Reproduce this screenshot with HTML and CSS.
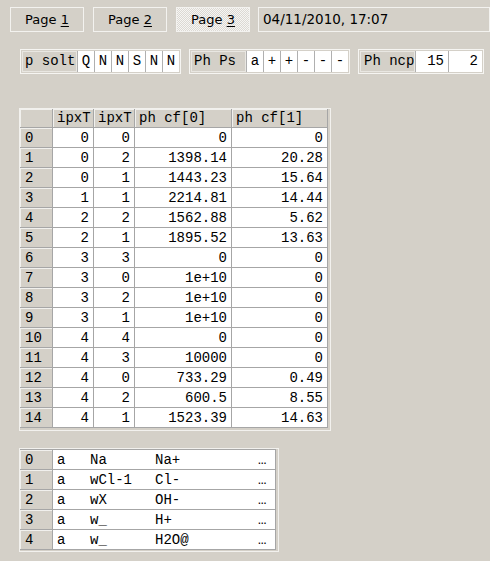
FILE: index.html
```html
<!DOCTYPE html>
<html>
<head>
<meta charset="utf-8">
<link rel="stylesheet" href="styles.css">
</head>
<body>
<div class="page">
  <div class="tabs">
    <div class="tab">Page <u>1</u></div>
    <div class="tab">Page <u>2</u></div>
    <div class="tab active">Page <u>3</u></div>
    <div class="date">04/11/2010, 17:07</div>
  </div>

  <div class="fields">
    <div class="group">
      <div class="label">p solt</div>
      <div class="cell">Q</div>
      <div class="cell">N</div>
      <div class="cell">N</div>
      <div class="cell">S</div>
      <div class="cell">N</div>
      <div class="cell">N</div>
    </div>
    <div class="group">
      <div class="label">Ph Ps</div>
      <div class="cell">a</div>
      <div class="cell">+</div>
      <div class="cell">+</div>
      <div class="cell">-</div>
      <div class="cell">-</div>
      <div class="cell">-</div>
    </div>
    <div class="group">
      <div class="label narrow">Ph ncp</div>
      <div class="cell num w33">15</div>
      <div class="cell num w34">2</div>
    </div>
  </div>

  <div class="frame main">
    <table class="grid">
      <colgroup>
        <col class="c-idx"><col class="c-n"><col class="c-n"><col class="c-w1"><col class="c-w2">
      </colgroup>
      <thead>
        <tr><th class="corner"></th><th>ipxT</th><th>ipxT</th><th>ph cf[0]</th><th>ph cf[1]</th></tr>
      </thead>
      <tbody>
        <tr><th>0</th><td>0</td><td>0</td><td>0</td><td>0</td></tr>
        <tr><th>1</th><td>0</td><td>2</td><td>1398.14</td><td>20.28</td></tr>
        <tr><th>2</th><td>0</td><td>1</td><td>1443.23</td><td>15.64</td></tr>
        <tr><th>3</th><td>1</td><td>1</td><td>2214.81</td><td>14.44</td></tr>
        <tr><th>4</th><td>2</td><td>2</td><td>1562.88</td><td>5.62</td></tr>
        <tr><th>5</th><td>2</td><td>1</td><td>1895.52</td><td>13.63</td></tr>
        <tr><th>6</th><td>3</td><td>3</td><td>0</td><td>0</td></tr>
        <tr><th>7</th><td>3</td><td>0</td><td>1e+10</td><td>0</td></tr>
        <tr><th>8</th><td>3</td><td>2</td><td>1e+10</td><td>0</td></tr>
        <tr><th>9</th><td>3</td><td>1</td><td>1e+10</td><td>0</td></tr>
        <tr><th>10</th><td>4</td><td>4</td><td>0</td><td>0</td></tr>
        <tr><th>11</th><td>4</td><td>3</td><td>10000</td><td>0</td></tr>
        <tr><th>12</th><td>4</td><td>0</td><td>733.29</td><td>0.49</td></tr>
        <tr><th>13</th><td>4</td><td>2</td><td>600.5</td><td>8.55</td></tr>
        <tr><th>14</th><td>4</td><td>1</td><td>1523.39</td><td>14.63</td></tr>
      </tbody>
    </table>
  </div>

  <div class="frame list">
    <table class="plist">
      <colgroup>
        <col class="l-idx"><col class="l-a"><col class="l-name"><col class="l-form"><col class="l-more">
      </colgroup>
      <tbody>
        <tr><th>0</th><td>a</td><td>Na</td><td>Na+</td><td class="more">…</td></tr>
        <tr><th>1</th><td>a</td><td>wCl-1</td><td>Cl-</td><td class="more">…</td></tr>
        <tr><th>2</th><td>a</td><td>wX</td><td>OH-</td><td class="more">…</td></tr>
        <tr><th>3</th><td>a</td><td>w_</td><td>H+</td><td class="more">…</td></tr>
        <tr><th>4</th><td>a</td><td>w_</td><td>H2O@</td><td class="more">…</td></tr>
      </tbody>
    </table>
  </div>
</div>
</body>
</html>
```

FILE: styles.css
```css
html, body {
  margin: 0;
  padding: 0;
  background: #d4d0c8;
}

.page {
  padding-top: 7px;
  font-family: "DejaVu Sans", "Liberation Sans", sans-serif;
  color: #000;
}

/* top tab row */
.tabs {
  display: flex;
  gap: 9px;
  padding-left: 10px;
}

.tab {
  width: 74px;
  height: 25px;
  box-sizing: border-box;
  border: 1px solid #f3f2ef;
  font-size: 13px;
  line-height: 23px;
  text-align: center;
}

.tab u {
  text-decoration: underline;
  text-underline-offset: 2px;
}

.tab.active {
  background: repeating-conic-gradient(#f6f5f3 0 25%, #dcd9d3 0 50%) 0 0 / 2px 2px;
}

.date {
  flex: 1;
  margin-left: -1px;
  height: 25px;
  box-sizing: border-box;
  border: 1px solid #f3f2ef;
  font-size: 13.5px;
  line-height: 23px;
  padding-left: 4px;
}

/* field groups */
.fields {
  display: flex;
  gap: 8px;
  margin: 17px 0 0 20px;
}

.group {
  display: flex;
  height: 25px;
  box-sizing: border-box;
  border: 1px solid #f6f5f2;
  padding: 1px;
  font-family: "Liberation Mono", monospace;
  font-size: 14px;
}

.label {
  width: 55px;
  box-sizing: border-box;
  border: 1px solid #e9e7e2;
  background: #d4d0c8;
  padding-left: 2px;
  line-height: 19px;
  white-space: nowrap;
  overflow: hidden;
}

.label.narrow {
  padding-left: 3px;
}

.cell {
  width: 17px;
  box-sizing: border-box;
  background: #fff;
  border-left: 1px solid #b0b0b0;
  text-align: center;
  line-height: 21px;
}

.cell.num {
  text-align: right;
  padding-right: 4px;
}

.cell.w33 { width: 33px; }
.cell.w34 { width: 34px; }

/* table frames */
.frame {
  display: block;
  width: fit-content;
  margin-left: 19px;
  border: 1px solid #f2f1ee;
}

.frame.main {
  margin-top: 34px;
  padding: 0 2px 2px 0;
}

.frame.list {
  margin-top: 17px;
  padding: 0 2px 1px 0;
}

table {
  border-collapse: separate;
  border-spacing: 0;
  table-layout: fixed;
  font-family: "Liberation Mono", monospace;
  font-size: 14px;
  color: #000;
}

th, td {
  box-sizing: border-box;
  height: 20px;
  padding: 0;
  white-space: nowrap;
  overflow: hidden;
  font-weight: normal;
  border-right: 1px solid #a6a6a6;
  border-bottom: 1px solid #a6a6a6;
}

th {
  background: #d4d0c8;
  text-align: left;
  padding-left: 5px;
  box-shadow: inset 1px 1px 0 #f1f0ed;
}

td {
  background: #fff;
}

.grid thead th {
  height: 19px;
  padding-left: 4px;
}

.grid td {
  text-align: right;
  padding-right: 4px;
}

.grid { width: 308px; }
.c-idx { width: 33px; }
.c-n { width: 41px; }
.c-w1 { width: 97px; }
.c-w2 { width: 96px; }

.plist { width: 256px; }
.l-idx { width: 33px; }
.l-a { width: 33px; }
.l-name { width: 65px; }
.l-form { width: 102px; }
.l-more { width: 23px; }

.plist td {
  text-align: left;
  padding-left: 4px;
  border-right: none;
}

.plist td.more {
  border-right: 1px solid #a6a6a6;
  padding-left: 5px;
}

.plist tr:first-child th,
.plist tr:first-child td {
  height: 21px;
  border-top: 1px solid #a6a6a6;
}
```
